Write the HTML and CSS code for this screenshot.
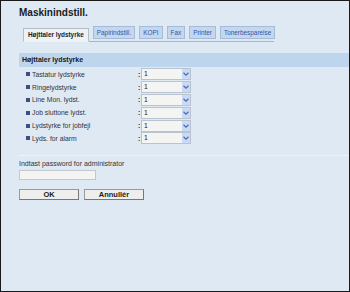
FILE: index.html
```html
<!DOCTYPE html>
<html lang="da">
<head>
    <meta charset="UTF-8">
    <title>Maskinindstill.</title>
    <link rel="stylesheet" href="styles.css">
</head>
<body>
    <div class="page">
        <h1 class="title">Maskinindstill.</h1>

        <div class="tabs">
            <span class="tab active">Højttaler lydstyrke</span>
            <span class="tab">Papirindstill.</span>
            <span class="tab">KOPI</span>
            <span class="tab">Fax</span>
            <span class="tab">Printer</span>
            <span class="tab">Tonerbesparelse</span>
        </div>

        <div class="section">
            <div class="section-head">Højttaler lydstyrke</div>
            <div class="rows">
                <div class="row"><span class="bullet"></span><span class="label">Tastatur lydstyrke</span><span class="colon">:</span><span class="select"><span class="val">1</span><span class="arrow"><svg width="6" height="4" viewBox="0 0 6 4"><path d="M0.5 0.8 L3 3.2 L5.5 0.8" fill="none" stroke="#4a6fb0" stroke-width="1.2"/></svg></span></span></div>
                <div class="row"><span class="bullet"></span><span class="label">Ringelydstyrke</span><span class="colon">:</span><span class="select"><span class="val">1</span><span class="arrow"><svg width="6" height="4" viewBox="0 0 6 4"><path d="M0.5 0.8 L3 3.2 L5.5 0.8" fill="none" stroke="#4a6fb0" stroke-width="1.2"/></svg></span></span></div>
                <div class="row"><span class="bullet"></span><span class="label">Line Mon. lydst.</span><span class="colon">:</span><span class="select"><span class="val">1</span><span class="arrow"><svg width="6" height="4" viewBox="0 0 6 4"><path d="M0.5 0.8 L3 3.2 L5.5 0.8" fill="none" stroke="#4a6fb0" stroke-width="1.2"/></svg></span></span></div>
                <div class="row"><span class="bullet"></span><span class="label">Job sluttone lydst.</span><span class="colon">:</span><span class="select"><span class="val">1</span><span class="arrow"><svg width="6" height="4" viewBox="0 0 6 4"><path d="M0.5 0.8 L3 3.2 L5.5 0.8" fill="none" stroke="#4a6fb0" stroke-width="1.2"/></svg></span></span></div>
                <div class="row"><span class="bullet"></span><span class="label">Lydstyrke for jobfejl</span><span class="colon">:</span><span class="select"><span class="val">1</span><span class="arrow"><svg width="6" height="4" viewBox="0 0 6 4"><path d="M0.5 0.8 L3 3.2 L5.5 0.8" fill="none" stroke="#4a6fb0" stroke-width="1.2"/></svg></span></span></div>
                <div class="row"><span class="bullet"></span><span class="label">Lyds. for alarm</span><span class="colon">:</span><span class="select"><span class="val">1</span><span class="arrow"><svg width="6" height="4" viewBox="0 0 6 4"><path d="M0.5 0.8 L3 3.2 L5.5 0.8" fill="none" stroke="#4a6fb0" stroke-width="1.2"/></svg></span></span></div>
            </div>
        </div>

        <div class="password">
            <div class="pw-label">Indtast password for administrator</div>
            <div class="pw-input"></div>
        </div>

        <div class="buttons">
            <span class="btn">OK</span>
            <span class="btn">Annullér</span>
        </div>
    </div>
</body>
</html>
```

FILE: styles.css
```css
body {
    margin: 0;
    font-family: "Liberation Sans", Arial, sans-serif;
    color: #222;
}
.page {
    width: 350px;
    height: 292px;
    box-sizing: border-box;
    border: 1px solid #1a1a1a;
    background-color: #dfe9f3;
    padding: 5px 0 0 18px;
}
.title {
    margin: 0;
    font-size: 10px;
    line-height: 14px;
    font-weight: bold;
    color: #1a1a1a;
}
.tabs {
    display: flex;
    gap: 4px;
    margin: 6px 0 0 4px;
    width: 251px;
    border-bottom: 1px solid #a9b6c4;
    align-items: flex-end;
}
.tab {
    white-space: nowrap;
    font-size: 6.4px;
    line-height: 11px;
    padding: 0 3px;
    margin-bottom: 2px;
    background-color: #c3d8f0;
    border: 1px solid #a5bcd8;
    color: #3556a0;
}
.tab.active {
    background-color: #edf2f7;
    border-color: #b4bcc6;
    border-bottom-color: #edf2f7;
    color: #222;
    font-weight: bold;
    padding: 0 4px;
    line-height: 12px;
    margin-bottom: -1px;
}
.section {
    margin-top: 11px;
    border-bottom: 1px solid #eef3f8;
    padding-bottom: 10px;
}
.section-head {
    background-color: #bdd6ee;
    font-size: 7px;
    font-weight: bold;
    line-height: 14px;
    padding-left: 3px;
    color: #1a1a1a;
}
.rows {
    padding: 1px 0 0 7px;
}
.row {
    display: flex;
    align-items: center;
    height: 12.8px;
    font-size: 6.8px;
}
.bullet {
    width: 4px;
    height: 4px;
    background-color: #3b4f86;
    margin-right: 2px;
}
.label {
    width: 106px;
    color: #333;
}
.colon {
    width: 3px;
    font-weight: bold;
}
.select {
    display: flex;
    width: 48px;
    height: 10px;
    border: 1px solid #b9c4d0;
    background-color: #f4f4f2;
}
.val {
    flex: 1;
    line-height: 10px;
    padding-left: 2px;
}
.arrow {
    width: 8px;
    background-color: #c9d9f6;
    display: flex;
    align-items: center;
    justify-content: center;
}
.password {
    margin-top: 3px;
}
.pw-label {
    font-size: 7px;
    line-height: 9px;
    color: #333;
}
.pw-input {
    width: 75px;
    height: 8px;
    margin-top: 2px;
    border: 1px solid #c2c8cf;
    background-color: #f4f4f2;
}
.buttons {
    display: flex;
    gap: 5px;
    margin-top: 9px;
}
.btn {
    width: 58px;
    height: 9px;
    line-height: 9px;
    text-align: center;
    font-size: 7.5px;
    font-weight: bold;
    background-color: #eeeeec;
    border: 1px solid #9a9a9a;
    border-right-color: #777;
    border-bottom-color: #777;
    color: #1a1a1a;
}
```
